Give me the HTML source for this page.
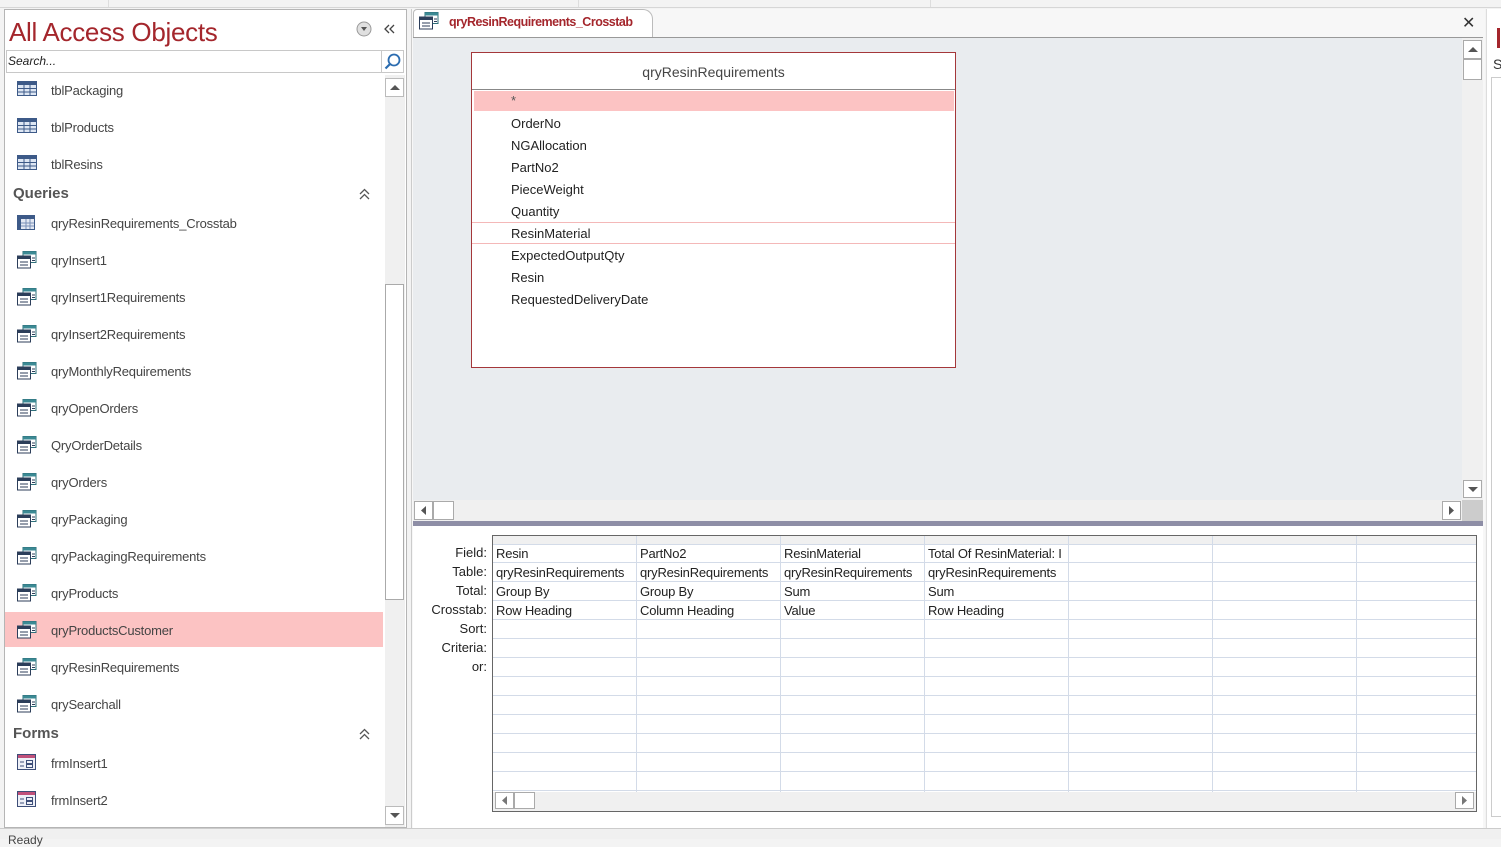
<!DOCTYPE html>
<html><head><meta charset="utf-8"><style>
*{margin:0;padding:0;box-sizing:border-box}
body{width:1501px;height:839px;overflow:hidden;background:#f3f3f3;font-family:"Liberation Sans",sans-serif;position:relative;font-size:13px;color:#444}
.a{position:absolute}
.item{position:absolute;left:51px;font-size:13px;color:#444;line-height:16px;letter-spacing:-0.2px}
.ic{position:absolute;left:17px}
.hdr{position:absolute;left:13px;font-size:15px;font-weight:bold;color:#555}
.fld{position:absolute;left:511px;font-size:13px;color:#222}
.lbl{position:absolute;width:80px;left:407px;text-align:right;font-size:13px;color:#222}
.cell{position:absolute;font-size:13px;color:#222;white-space:nowrap;letter-spacing:-0.2px}
</style></head><body>
<div class="a" style="left:0;top:0;width:1501px;height:8px;background:#f3f3f3;border-bottom:1px solid #d6d6d6"></div>
<div class="a" style="left:108px;top:0;width:1px;height:7px;background:#ddd"></div>
<div class="a" style="left:578px;top:0;width:1px;height:7px;background:#ddd"></div>
<div class="a" style="left:930px;top:0;width:1px;height:7px;background:#ddd"></div>

<div class="a" style="left:4px;top:9px;width:403px;height:819px;background:#fff;border:1px solid #b5b5b5"></div>
<div class="a" style="left:9px;top:15px;font-size:26px;color:#a4262c;line-height:34px;letter-spacing:-0.3px">All Access Objects</div>
<svg class="a" style="left:356px;top:21px" width="16" height="16"><circle cx="8" cy="8" r="7" fill="#e0e0e0" stroke="#999"/><path d="M5 6h6l-3 4z" fill="#555"/></svg>
<svg class="a" style="left:384px;top:24px" width="12" height="10"><path d="M5 1L1 5L5 9M10 1L6 5L10 9" fill="none" stroke="#444" stroke-width="1.3"/></svg>
<div class="a" style="left:6px;top:50px;width:398px;height:23px;border:1px solid #c8c8c8;background:#fff"></div>
<div class="a" style="left:8px;top:54px;font-size:12px;font-style:italic;color:#222">Search...</div>
<div class="a" style="left:381px;top:51px;width:1px;height:21px;background:#c8c8c8"></div>
<svg class="a" style="left:383px;top:52px" width="20" height="20"><circle cx="11" cy="8" r="5.5" fill="none" stroke="#2b6cb0" stroke-width="1.8"/><path d="M7 12l-4.5 4.5" stroke="#2b6cb0" stroke-width="2.2"/></svg>
<div class="a" style="left:385px;top:75px;width:20px;height:752px;background:#f0f0f0"></div>
<div class="a" style="left:385px;top:78px;width:19px;height:19px;background:#fff;border:1px solid #bbb"></div>
<svg class="a" style="left:389px;top:84px" width="12" height="7"><path d="M1 6L6 1L11 6z" fill="#555"/></svg>
<div class="a" style="left:385px;top:284px;width:19px;height:316px;background:#fff;border:1px solid #aaa"></div>
<div class="a" style="left:385px;top:806px;width:19px;height:19px;background:#fff;border:1px solid #bbb"></div>
<svg class="a" style="left:389px;top:812px" width="12" height="7"><path d="M1 1L6 6L11 1z" fill="#555"/></svg>

<div class="a" style="left:5px;top:612px;width:378px;height:35px;background:#fcc3c3"></div>

<svg class="ic" style="top:81px" width="20" height="16"><rect x="0.5" y="0.5" width="19" height="14" fill="#dde6f3" stroke="#3d5a88"/><rect x="1" y="1" width="18" height="3" fill="#3d5a88"/><path d="M1 7.5h18M1 11h18M7 4v10M13 4v10" stroke="#3d5a88" stroke-width="1"/></svg>
<svg class="ic" style="top:118px" width="20" height="16"><rect x="0.5" y="0.5" width="19" height="14" fill="#dde6f3" stroke="#3d5a88"/><rect x="1" y="1" width="18" height="3" fill="#3d5a88"/><path d="M1 7.5h18M1 11h18M7 4v10M13 4v10" stroke="#3d5a88" stroke-width="1"/></svg>
<svg class="ic" style="top:155px" width="20" height="16"><rect x="0.5" y="0.5" width="19" height="14" fill="#dde6f3" stroke="#3d5a88"/><rect x="1" y="1" width="18" height="3" fill="#3d5a88"/><path d="M1 7.5h18M1 11h18M7 4v10M13 4v10" stroke="#3d5a88" stroke-width="1"/></svg>
<div class="item" style="top:83px">tblPackaging</div>
<div class="item" style="top:120px">tblProducts</div>
<div class="item" style="top:157px">tblResins</div>
<div class="hdr" style="top:185px">Queries</div>
<svg class="a" style="left:359px;top:188px" width="11" height="12"><path d="M1 6L5.5 1.5L10 6M1 11L5.5 6.5L10 11" fill="none" stroke="#555" stroke-width="1.3"/></svg>
<div class="hdr" style="top:725px">Forms</div>
<svg class="a" style="left:359px;top:728px" width="11" height="12"><path d="M1 6L5.5 1.5L10 6M1 11L5.5 6.5L10 11" fill="none" stroke="#555" stroke-width="1.3"/></svg>

<svg class="ic" style="top:215px" width="18" height="15"><rect x="0.5" y="0.5" width="17" height="14" fill="#e3e8f2" stroke="#3d5a88"/><rect x="1" y="1" width="16" height="3" fill="#3d5a88"/><rect x="1" y="4" width="3" height="10" fill="#3d5a88"/><path d="M4 8h13M4 11h13M9 4v10M13 4v10" stroke="#7a90b8"/></svg>
<div class="item" style="top:216px">qryResinRequirements_Crosstab</div>

<svg width="0" height="0" style="position:absolute"><defs><g id="q"><rect x="6" y="0.5" width="13" height="11" fill="#fff" stroke="#2e6f7a"/><rect x="6" y="0.5" width="13" height="3" fill="#3b8a94"/><rect x="0.5" y="5" width="13" height="12" fill="#fff" stroke="#2c3e5a"/><rect x="0.5" y="5" width="13" height="3" fill="#2c3e5a"/><path d="M3 11h8M3 14h8M15 7h3M15 9.5h3" stroke="#2c3e5a"/></g><g id="f"><rect x="0.5" y="0.5" width="18" height="15" fill="#eef0f7" stroke="#3d4e78"/><rect x="1" y="1" width="17" height="3" fill="#c0507a"/><path d="M3 8h4M3 12h4" stroke="#3d4e78"/><rect x="9.5" y="6.5" width="6" height="3" fill="none" stroke="#3d4e78"/><rect x="9.5" y="10.5" width="6" height="3" fill="none" stroke="#3d4e78"/></g></defs></svg>
<svg class="ic" style="top:251px" width="20" height="18"><use href="#q"/></svg>
<svg class="ic" style="top:288px" width="20" height="18"><use href="#q"/></svg>
<svg class="ic" style="top:325px" width="20" height="18"><use href="#q"/></svg>
<svg class="ic" style="top:362px" width="20" height="18"><use href="#q"/></svg>
<svg class="ic" style="top:399px" width="20" height="18"><use href="#q"/></svg>
<svg class="ic" style="top:436px" width="20" height="18"><use href="#q"/></svg>
<svg class="ic" style="top:473px" width="20" height="18"><use href="#q"/></svg>
<svg class="ic" style="top:510px" width="20" height="18"><use href="#q"/></svg>
<svg class="ic" style="top:547px" width="20" height="18"><use href="#q"/></svg>
<svg class="ic" style="top:584px" width="20" height="18"><use href="#q"/></svg>
<svg class="ic" style="top:621px" width="20" height="18"><use href="#q"/></svg>
<svg class="ic" style="top:658px" width="20" height="18"><use href="#q"/></svg>
<svg class="ic" style="top:695px" width="20" height="18"><use href="#q"/></svg>
<div class="item" style="top:253px">qryInsert1</div>
<div class="item" style="top:290px">qryInsert1Requirements</div>
<div class="item" style="top:327px">qryInsert2Requirements</div>
<div class="item" style="top:364px">qryMonthlyRequirements</div>
<div class="item" style="top:401px">qryOpenOrders</div>
<div class="item" style="top:438px">QryOrderDetails</div>
<div class="item" style="top:475px">qryOrders</div>
<div class="item" style="top:512px">qryPackaging</div>
<div class="item" style="top:549px">qryPackagingRequirements</div>
<div class="item" style="top:586px">qryProducts</div>
<div class="item" style="top:623px">qryProductsCustomer</div>
<div class="item" style="top:660px">qryResinRequirements</div>
<div class="item" style="top:697px">qrySearchall</div>
<svg class="ic" style="top:754px" width="20" height="17"><use href="#f"/></svg>
<svg class="ic" style="top:791px" width="20" height="17"><use href="#f"/></svg>
<div class="item" style="top:756px">frmInsert1</div>
<div class="item" style="top:793px">frmInsert2</div>

<div class="a" style="left:411px;top:9px;width:1074px;height:819px;background:#f7f7f7;border-left:1px solid #ccc"></div>
<div class="a" style="left:413px;top:9px;width:240px;height:30px;background:#fff;border:1px solid #bbb;border-bottom:none;border-radius:4px 10px 0 0"></div>
<svg class="a" style="left:419px;top:12px" width="20" height="18"><use href="#q"/></svg>
<div class="a" style="left:449px;top:15px;font-size:12.5px;font-weight:bold;color:#a4262c;letter-spacing:-0.5px">qryResinRequirements_Crosstab</div>
<div class="a" style="left:1462px;top:13px;font-size:16px;color:#333">✕</div>
<div class="a" style="left:413px;top:37px;width:1070px;height:1px;background:#999"></div>
<div class="a" style="left:413px;top:38px;width:1049px;height:462px;background:#e9ecef"></div>
<div class="a" style="left:1462px;top:38px;width:21px;height:462px;background:#f0f0f0"></div>
<div class="a" style="left:1463px;top:40px;width:19px;height:19px;background:#fff;border:1px solid #aaa"></div>
<svg class="a" style="left:1467px;top:46px" width="12" height="7"><path d="M1 6L6 1L11 6z" fill="#555"/></svg>
<div class="a" style="left:1463px;top:59px;width:19px;height:21px;background:#fff;border:1px solid #aaa"></div>
<div class="a" style="left:1463px;top:480px;width:19px;height:18px;background:#fff;border:1px solid #aaa"></div>
<svg class="a" style="left:1467px;top:486px" width="12" height="7"><path d="M1 1L6 6L11 1z" fill="#555"/></svg>
<div class="a" style="left:413px;top:500px;width:1049px;height:21px;background:#f0f0f0"></div>
<div class="a" style="left:414px;top:501px;width:19px;height:19px;background:#fff;border:1px solid #aaa"></div>
<svg class="a" style="left:420px;top:505px" width="7" height="11"><path d="M6 1L1 5.5L6 10z" fill="#555"/></svg>
<div class="a" style="left:433px;top:501px;width:21px;height:19px;background:#fff;border:1px solid #aaa"></div>
<div class="a" style="left:1442px;top:501px;width:19px;height:19px;background:#fff;border:1px solid #aaa"></div>
<svg class="a" style="left:1448px;top:505px" width="7" height="11"><path d="M1 1L6 5.5L1 10z" fill="#555"/></svg>
<div class="a" style="left:1462px;top:500px;width:21px;height:21px;background:#ccc"></div>
<div class="a" style="left:413px;top:521px;width:1070px;height:5px;background:#8e8ea6"></div>
<div class="a" style="left:413px;top:526px;width:1070px;height:302px;background:#fff"></div>

<div class="a" style="left:471px;top:52px;width:485px;height:316px;background:#fff;border:1px solid #a4373a"></div>
<div class="a" style="left:472px;top:64px;width:483px;text-align:center;font-size:14px;color:#444">qryResinRequirements</div>
<div class="a" style="left:472px;top:89px;width:483px;height:1px;background:#888"></div>
<div class="a" style="left:474px;top:91px;width:480px;height:20px;background:#fcc3c3"></div>
<div class="fld" style="top:93px;color:#555">*</div>
<div class="a" style="left:472px;top:222px;width:483px;height:22px;border-top:1px solid #f4b8b8;border-bottom:1px solid #f4b8b8"></div>
<div class="fld" style="top:116px">OrderNo</div>
<div class="fld" style="top:138px">NGAllocation</div>
<div class="fld" style="top:160px">PartNo2</div>
<div class="fld" style="top:182px">PieceWeight</div>
<div class="fld" style="top:204px">Quantity</div>
<div class="fld" style="top:226px">ResinMaterial</div>
<div class="fld" style="top:248px">ExpectedOutputQty</div>
<div class="fld" style="top:270px">Resin</div>
<div class="fld" style="top:292px">RequestedDeliveryDate</div>

<div class="a" style="left:492px;top:535px;width:985px;height:277px;border:1px solid #666;background:#fff"></div>
<div class="a" style="left:493px;top:536px;width:983px;height:8px;background:#f0f0f0"></div>
<svg class="a" style="left:493px;top:536px" width="983" height="256">
<g stroke="#d3dbe8" stroke-width="1">
<path d="M143.5 0V256M287.5 0V256M431.5 0V256M575.5 0V256M719.5 0V256M863.5 0V256"/>
<path d="M0 8.5H983M0 26.5H983M0 45.5H983M0 64.5H983M0 83.5H983M0 102.5H983M0 121.5H983M0 140.5H983M0 159.5H983M0 178.5H983M0 197.5H983M0 216.5H983M0 235.5H983M0 254.5H983"/>
</g></svg>
<div class="a" style="left:493px;top:792px;width:983px;height:19px;background:#f0f0f0"></div>
<div class="a" style="left:495px;top:792px;width:19px;height:17px;background:#fff;border:1px solid #aaa"></div>
<svg class="a" style="left:501px;top:795px" width="7" height="11"><path d="M6 1L1 5.5L6 10z" fill="#777"/></svg>
<div class="a" style="left:514px;top:792px;width:21px;height:17px;background:#fff;border:1px solid #aaa"></div>
<div class="a" style="left:1455px;top:792px;width:19px;height:17px;background:#fff;border:1px solid #aaa"></div>
<svg class="a" style="left:1461px;top:795px" width="7" height="11"><path d="M1 1L6 5.5L1 10z" fill="#777"/></svg>

<div class="lbl" style="top:545px">Field:</div>
<div class="lbl" style="top:564px">Table:</div>
<div class="lbl" style="top:583px">Total:</div>
<div class="lbl" style="top:602px">Crosstab:</div>
<div class="lbl" style="top:621px">Sort:</div>
<div class="lbl" style="top:640px">Criteria:</div>
<div class="lbl" style="top:659px">or:</div>
<div class="cell" style="left:496px;top:546px">Resin</div>
<div class="cell" style="left:496px;top:565px">qryResinRequirements</div>
<div class="cell" style="left:496px;top:584px">Group By</div>
<div class="cell" style="left:496px;top:603px">Row Heading</div>
<div class="cell" style="left:640px;top:546px">PartNo2</div>
<div class="cell" style="left:640px;top:565px">qryResinRequirements</div>
<div class="cell" style="left:640px;top:584px">Group By</div>
<div class="cell" style="left:640px;top:603px">Column Heading</div>
<div class="cell" style="left:784px;top:546px">ResinMaterial</div>
<div class="cell" style="left:784px;top:565px">qryResinRequirements</div>
<div class="cell" style="left:784px;top:584px">Sum</div>
<div class="cell" style="left:784px;top:603px">Value</div>
<div class="cell" style="left:928px;top:546px;width:140px;overflow:hidden">Total Of ResinMaterial: I</div>
<div class="cell" style="left:928px;top:565px">qryResinRequirements</div>
<div class="cell" style="left:928px;top:584px">Sum</div>
<div class="cell" style="left:928px;top:603px">Row Heading</div>

<div class="a" style="left:1486px;top:9px;width:15px;height:819px;background:#fff;border-left:1px solid #ddd"></div>
<div class="a" style="left:1497px;top:28px;width:3px;height:20px;background:#a4262c"></div>
<div class="a" style="left:1493px;top:56px;font-size:14px;color:#333">S</div>
<div class="a" style="left:1491px;top:77px;width:10px;height:740px;border:1px solid #ccc;border-right:none"></div>
<div class="a" style="left:0;top:828px;width:1501px;height:11px;background:#f0f0f0;border-top:1px solid #ccc"></div>
<div class="a" style="left:8px;top:833px;font-size:12px;color:#444">Ready</div>
</body></html>
